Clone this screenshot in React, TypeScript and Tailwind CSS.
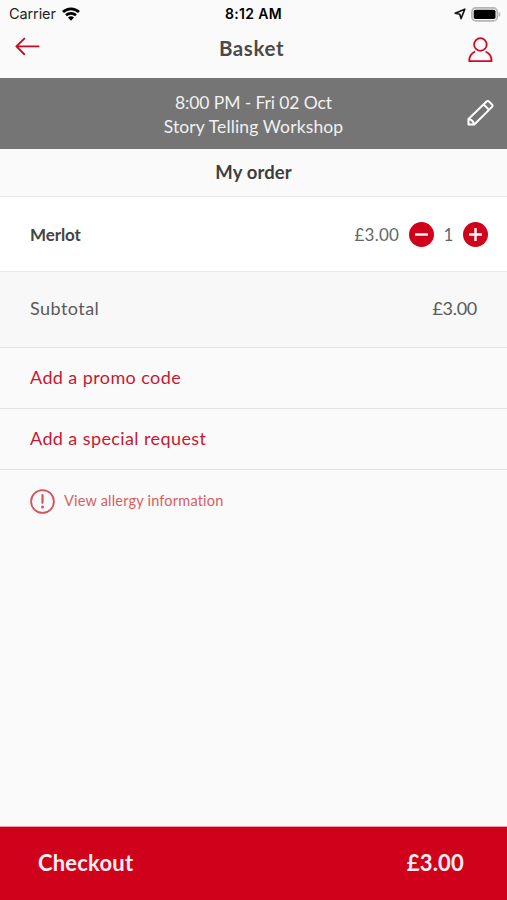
import type { ReactNode } from "react";

const StatusBar = () => (
  <div className="relative flex h-7 items-center justify-between pl-[9px] pr-[6px] font-['Inter',sans-serif] text-black">
    <div className="flex items-center gap-[6px]">
      <span className="text-[14.5px] leading-5 tracking-[-0.1px] text-[#222]">Carrier</span>
      <svg width="18" height="14" viewBox="0 0 18 14" fill="none" stroke="#000" strokeWidth="2.7">
        <path d="M1 5.1a11.6 11.6 0 0 1 16 0" />
        <path d="M4 8.3a7.3 7.3 0 0 1 10 0" />
        <path d="M9 13.8 6 10.6a4.4 4.4 0 0 1 6 0Z" fill="#000" stroke="none" />
      </svg>
    </div>
    <span className="absolute left-0 w-full text-center text-[14px] font-semibold leading-5 tracking-[0.35px]">
      8:12 AM
    </span>
    <div className="flex items-center gap-[5px]">
      <svg width="12" height="12" viewBox="0 0 12 12" fill="none" stroke="#111" strokeWidth="1.6" strokeLinejoin="round">
        <path d="M10.8 1.2 7 10.6 5.8 6.3 1.2 5.3Z" />
      </svg>
      <svg width="30" height="15" viewBox="0 0 30 15" fill="none">
        <rect x="0.9" y="0.9" width="25.4" height="13" rx="4" stroke="#b5b5b5" strokeWidth="1.7" />
        <rect x="2.7" y="2.7" width="21.8" height="9.4" rx="1.8" fill="#000" />
        <path d="M27.7 5v4.8c2.2-.8 2.2-4 0-4.8Z" fill="#b5b5b5" />
      </svg>
    </div>
  </div>
);

const Header = () => (
  <header className="relative flex h-[50px] justify-between pl-[15px] pr-[14px]">
    <button aria-label="Back" className="mt-[9px] h-[19px]">
      <svg width="25" height="19" viewBox="0 0 25 19" fill="none" stroke="#cf0a22" strokeWidth="1.9" strokeLinecap="round" strokeLinejoin="round">
        <path d="M9.3 1.6 1.4 9.4l7.9 7.8M1.4 9.4h22.2" />
      </svg>
    </button>
    <h1 className="absolute left-0 top-[7px] w-[503px] text-center text-[20.5px] font-bold leading-[26px] tracking-[0.6px] text-[#4a4a4a]">
      Basket
    </h1>
    <button aria-label="Account" className="mt-[9px] h-[26px]">
      <svg width="25" height="26" viewBox="0 0 25 26" fill="none" stroke="#cf0a22" strokeWidth="1.8" strokeLinejoin="round">
        <circle cx="12.4" cy="7.5" r="6.3" />
        <path d="M7.2 14.5C3.4 16.2 1.2 19.8 1.2 24.2h22.4c0-4.4-2.2-8-6-9.700" />
      </svg>
    </button>
  </header>
);

const EventBar = () => (
  <div className="relative h-[71px] bg-[#757575] pt-[13px] text-center text-[17.5px] leading-6 text-[#f1f1f1]">
    <p className="tracking-[-0.1px]">8:00 PM - Fri 02 Oct</p>
    <p className="tracking-[0.14px]">Story Telling Workshop</p>
    <button aria-label="Edit" className="absolute right-[13px] top-[21px]">
      <svg width="27" height="28" viewBox="0 0 27 28" fill="none" stroke="#fff" strokeWidth="2" strokeLinejoin="round">
        <path d="M1.500 25.500V20L19.600 2.500q1.200-1.200 2.400 0l3 3q1.200 1.200 0 2.400L7.300 25.500ZM16.700 5.500l5.400 5.400M1.500 20q4.600 1 5.800 5.500" />
      </svg>
    </button>
  </div>
);

const RoundButton = ({ label, children }: { label: string; children: ReactNode }) => (
  <button aria-label={label} className="h-[25px] w-[25px] rounded-full bg-[#d0021b]">
    <svg width="25" height="25" viewBox="0 0 25 25" stroke="#fff" strokeWidth="2.4">
      {children}
    </svg>
  </button>
);

const OrderItem = () => (
  <div className="flex h-[75px] items-center justify-between border-b border-[#e8e8e8] bg-white pl-[30px] pr-[19px] text-[17px]">
    <span className="pt-[2px] font-bold tracking-[-0.1px] text-[#444]">Merlot</span>
    <div className="flex items-center text-[#62676a]">
      <span className="pt-[2px] tracking-[0.2px]">£3.00</span>
      <div className="ml-[10px] flex items-center">
        <RoundButton label="Remove one">
          <path d="M6 12.500h13" />
        </RoundButton>
        <span className="w-[29px] pt-[2px] text-center">1</span>
        <RoundButton label="Add one">
          <path d="M6 12.500h13M12.500 6v13" />
        </RoundButton>
      </div>
    </div>
  </div>
);

const ActionRow = ({ children }: { children: ReactNode }) => (
  <button className="flex w-full items-center border-b border-[#e2e2e2] pb-[2px] pl-[30px] text-[18px] tracking-[0.4px] text-[#cb1731]">
    {children}
  </button>
);

const App = () => {
  return (
    <div className="flex h-[900px] w-[507px] flex-col overflow-hidden bg-[#fafafa] font-['Lato',sans-serif]">
      <StatusBar />
      <Header />
      <EventBar />

      <h2 className="flex h-12 items-center justify-center border-b border-[#e8e8e8] text-[18.5px] font-bold tracking-[0.1px] text-[#3e3e3e]">
        My order
      </h2>
      <OrderItem />

      <div className="flex h-[76px] items-center justify-between border-b border-[#e2e2e2] bg-[#f8f8f8] pb-[2px] pl-[30px] pr-[30px] text-[18px] text-[#5a5a5a]">
        <span className="tracking-[0.45px]">Subtotal</span>
        <span className="tracking-[-0.3px]">£3.00</span>
      </div>

      <div className="grid grid-rows-[61px_61px]">
        <ActionRow>Add a promo code</ActionRow>
        <ActionRow>Add a special request</ActionRow>
      </div>

      <button className="flex h-[62px] items-center gap-[9px] pl-[30px] text-[14.5px] tracking-[0.2px] text-[#d95c63]">
        <svg width="25" height="25" viewBox="0 0 25 25" fill="none" stroke="#d4545c" strokeWidth="1.8" strokeLinecap="round">
          <circle cx="12.500" cy="12.500" r="11.400" />
          <path d="M12.500 6v7.800" strokeWidth="2.200" />
          <circle cx="12.500" cy="18" r="1.500" fill="#d4545c" stroke="none" />
        </svg>
        View allergy information
      </button>

      <button className="mt-auto flex h-[74px] items-center justify-between border-t border-[#eaa0aa] bg-[#d0021b] pb-[3px] pl-[38px] pr-[43px] text-[22px] font-bold text-[#ffeff1]">
        <span className="tracking-[0.2px]">Checkout</span>
        <span className="tracking-[0.2px]">£3.00</span>
      </button>
    </div>
  );
};

export default App;
